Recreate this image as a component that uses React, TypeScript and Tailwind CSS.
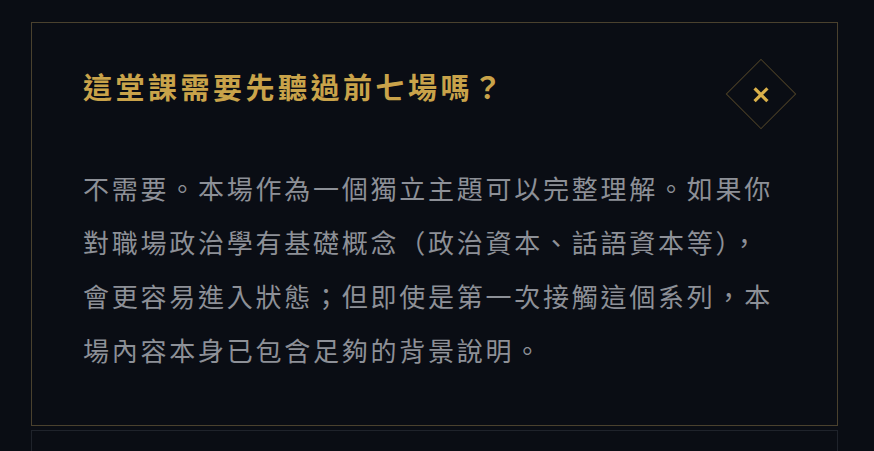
import { useState } from 'react'

const FAQ = {
  question: '這堂課需要先聽過前七場嗎？',
  answer:
    '不需要。本場作為一個獨立主題可以完整理解。如果你對職場政治學有基礎概念（政治資本、話語資本等），會更容易進入狀態；但即使是第一次接觸這個系列，本場內容本身已包含足夠的背景說明。',
}

export default function App() {
  const [open, setOpen] = useState(true)

  return (
    <div
      className="min-h-[451px] bg-[#0a0d14] pt-[22px] pl-[31px]"
      style={{ fontFamily: '"Noto Sans CJK TC", "Noto Sans", sans-serif' }}
    >
      <div className="w-[807px] border border-[#4a412e] bg-[#0a0d14] px-[51px] pt-[43px] pb-[48px]">
        <div className="flex items-start justify-between">
          <h3 className="text-[29px] leading-[40px] font-bold tracking-[3.5px] text-[#c9a34a]">
            {FAQ.question}
          </h3>
          <button
            onClick={() => setOpen(!open)}
            className="mt-[3px] flex h-[50px] w-[50px] rotate-45 items-center justify-center border border-[#4a3f26]"
            aria-label="Close"
          >
            <svg
              className="h-[17px] w-[17px] -rotate-45 text-[#d9b04a]"
              viewBox="0 0 16 16"
              fill="none"
              stroke="currentColor"
              strokeWidth={3}
              strokeLinecap="square"
            >
              <path d="M3 3l10 10M13 3L3 13" />
            </svg>
          </button>
        </div>
        {open && (
          <p className="mt-[42px] text-[26px] leading-[54px] tracking-[2.75px] text-[#8d9097]">
            {FAQ.answer}
          </p>
        )}
      </div>
      <div className="mt-1 h-[60px] w-[807px] border border-[#1f232b]" />
    </div>
  )
}
